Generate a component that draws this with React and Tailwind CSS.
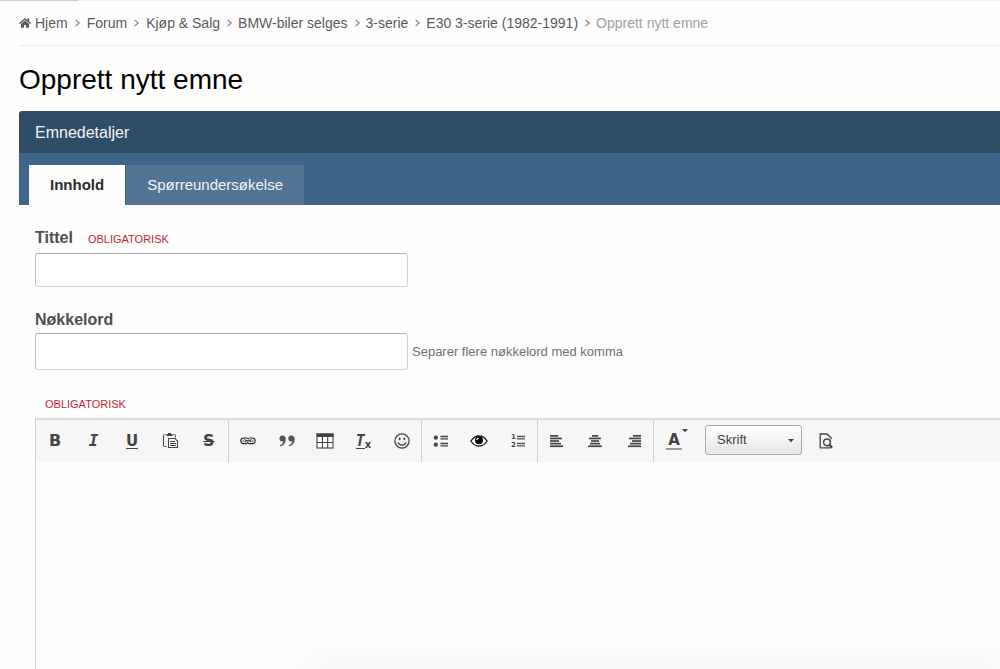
import { useState } from 'react';
import { FaHome } from 'react-icons/fa';
import clsx from 'clsx';

const crumbs = ['Hjem', 'Forum', 'Kjøp & Salg', 'BMW-biler selges', '3-serie', 'E30 3-serie (1982-1991)'];

const Chevron = () => (
  <svg width="5" height="8" viewBox="0 0 5 8" fill="none" stroke="#777" strokeWidth="1.1" aria-hidden="true">
    <path d="M0.6 0.8 4.2 4 0.6 7.2" />
  </svg>
);

const Icon = ({ size = 18, children }) => (
  <svg width={size} height={size} viewBox="0 0 18 18" fill="none" stroke="#444" strokeWidth="1.3" aria-hidden="true">
    {children}
  </svg>
);

const PasteIcon = () => (
  <Icon>
    <path d="M4.5 2.5H3.5Q2.5 2.5 2.5 3.5V13.5Q2.5 14.5 3.5 14.5H5.5M12.5 2.5H13.5Q14.5 2.5 14.5 3.5V5.5" strokeWidth="1" />
    <path d="M5.5 4V2H7V1H10V2H11.5V4Z" fill="#444" stroke="none" />
    <path d="M7.5 6.5H14L16.5 9V15.5H7.5Z" fill="#fafafa" strokeWidth="1.1" />
    <path d="M9 9.5H14M9 11.5H15M9 13.5H15" strokeWidth="1" />
  </Icon>
);

const LinkIcon = () => (
  <Icon>
    <g stroke="#222" strokeWidth="1.1">
      <path d="M8.2 11.6H4.6Q1.8 11.6 1.8 8.8T4.6 6H7.4Q9.2 6 9.8 7.4" />
      <path d="M9.8 6H13.4Q16.2 6 16.2 8.8T13.4 11.6H10.6Q8.8 11.6 8.2 10.2" />
      <path d="M7.4 7.8H5Q3.8 7.8 3.8 8.8T5 9.8H7.4M10.6 7.8H13Q14.2 7.8 14.2 8.8T13 9.8H10.6" stroke="#666" strokeWidth=".8" />
      <path d="M6 8.8H12" strokeWidth="1.2" />
    </g>
  </Icon>
);

const QuoteIcon = () => (
  <Icon>
    <g fill="#555" stroke="none">
      <path d="M4.3 3.6C6.6 3.6 8 5.2 7.8 7.8 7.5 11.4 5.3 13.9 2 14.4V13.4C4 12.5 5.2 11 5.3 9.3 3.2 10 1.4 8.6 1.4 6.5 1.4 4.8 2.7 3.6 4.3 3.6Z" />
      <path d="M13.2 3.6C15.5 3.6 16.9 5.2 16.7 7.8 16.4 11.4 14.2 13.9 10.9 14.4V13.4C12.9 12.5 14.1 11 14.2 9.3 12.1 10 10.3 8.6 10.3 6.5 10.3 4.8 11.6 3.6 13.2 3.6Z" />
    </g>
  </Icon>
);

const TableIcon = () => (
  <Icon>
    <rect x="1" y="2" width="16" height="14" fill="#fff" strokeWidth="1.1" />
    <path d="M.5 1.5H17.5V5H.5Z" fill="#444" stroke="none" />
    <path d="M1 10.5H17M6.4 5V16M11.7 5V16" strokeWidth="1.1" />
  </Icon>
);

const SmileIcon = () => (
  <Icon>
    <circle cx="9" cy="9" r="7.1" />
    <path d="M5 10.4C5.8 13.9 12.2 13.9 13 10.4" />
    <ellipse cx="6.6" cy="6.9" rx="1" ry="1.4" fill="#444" stroke="none" />
    <ellipse cx="11.4" cy="6.9" rx="1" ry="1.4" fill="#444" stroke="none" />
  </Icon>
);

const EyeIcon = () => (
  <Icon>
    <path d="M.9 9Q4.4 3.8 9 3.8T17.1 9Q13.6 14.2 9 14.2T.9 9Z" fill="#fff" stroke="#111" strokeWidth="1.3" />
    <circle cx="9" cy="8.3" r="4" fill="#000" stroke="none" />
    <path d="M6.6 8.1Q6.8 6.3 8.6 6.1" stroke="#fff" strokeWidth="1.1" />
  </Icon>
);

const BulletListIcon = () => (
  <Icon>
    <circle cx="3.8" cy="5.7" r="2.1" fill="#444" stroke="none" />
    <circle cx="3.8" cy="12.7" r="2.1" fill="#444" stroke="none" />
    <path d="M8.5 4.5H16M8.5 6.9H16M8.5 11.5H16M8.5 13.9H16" />
  </Icon>
);

const AlignIcon = ({ rows }) => (
  <Icon>
    {rows.map(([x, w], i) => (
      <rect key={i} x={x} y={3 + i * 2.6} width={w} height="1.7" fill="#444" stroke="none" />
    ))}
  </Icon>
);

const PreviewIcon = () => (
  <Icon>
    <path d="M13.8 15.8H3.2V2H10L14.2 6V7.2" />
    <circle cx="10" cy="10.3" r="3.4" strokeWidth="1.5" />
    <path d="M12.4 12.8 15.2 15.6" strokeWidth="2.2" />
  </Icon>
);

const NumberedListIcon = () => (
  <span className="flex items-center">
    <span className="flex w-[5px] flex-col font-['DejaVu_Sans'] text-[7px] leading-[8px] font-bold">
      <span>1</span>
      <span>2</span>
    </span>
    <svg width="9" height="12" viewBox="0 0 9 12" stroke="#555" strokeWidth="1.3" aria-hidden="true">
      <path d="M1 1.5H9M1 3.9H9M1 8.5H9M1 10.9H9" />
    </svg>
  </span>
);

const letter = "font-['DejaVu_Sans'] text-[16px] leading-[18px] font-bold";

const groups = [
  {
    width: 'w-[193px]',
    tools: [
      ['Fet', <span className={letter}>B</span>],
      ['Kursiv', <span className="font-['DejaVu_Sans_Mono'] text-[16px] leading-[18px] font-bold italic">I</span>],
      ['Understreket', <span className="border-b border-[#444] font-['DejaVu_Sans'] text-[15px] leading-[14px] font-bold">U</span>],
      ['Lim inn', <PasteIcon />],
      ['Gjennomstreket', <span className={clsx(letter, 'line-through decoration-1')}>S</span>],
    ],
  },
  {
    width: 'w-[193px]',
    tools: [
      ['Lenke', <LinkIcon />],
      ['Sitat', <QuoteIcon />],
      ['Tabell', <TableIcon />],
      [
        'Fjern formatering',
        <span className="flex items-end font-['DejaVu_Sans'] font-bold">
          <span className="border-b border-[#444] font-['DejaVu_Sans_Mono'] text-[15px] leading-[14px] italic">T</span>
          <span className="text-[10px] leading-[8px]">x</span>
        </span>,
      ],
      ['Smilefjes', <SmileIcon />],
    ],
  },
  {
    width: 'w-[116px]',
    tools: [
      ['Punktliste', <BulletListIcon />],
      ['Skjult innhold', <EyeIcon />],
      ['Nummerert liste', <NumberedListIcon />],
    ],
  },
  {
    width: 'w-[116px]',
    tools: [
      ['Venstrejuster', <AlignIcon rows={[[2, 8], [2, 12], [2, 9], [2, 11], [2, 13]]} />],
      ['Midtstill', <AlignIcon rows={[[6, 6], [3, 12], [5, 8], [4, 10], [2, 14]]} />],
      ['Høyrejuster', <AlignIcon rows={[[8, 8], [4, 12], [7, 9], [5, 11], [3, 13]]} />],
    ],
  },
];

const Breadcrumb = () => (
  <nav aria-label="Brødsmuler" className="border-b border-[#ececec] py-3">
    <ol className="flex items-center text-[14px] leading-5 whitespace-nowrap text-[#5a5a5a]">
      {crumbs.map((name, i) => (
        <li key={name} className="flex items-center">
          <a href="#" className="flex items-center gap-1">
            {i === 0 && <FaHome className="size-3" />}
            {name}
          </a>
          <span className={clsx('ml-[7px]', i < 2 ? 'mr-[7px]' : 'mr-1.5')}>
            <Chevron />
          </span>
        </li>
      ))}
      <li className="text-[#a0a0a0]">Opprett nytt emne</li>
    </ol>
  </nav>
);

const Required = () => <span className="text-[11px] leading-4 text-[#c2272d] uppercase">Obligatorisk</span>;

const Toolbar = () => (
  <div role="toolbar" aria-label="Formatering" className="flex h-11 items-stretch border-t-2 border-[#dcdcdc] bg-[#f6f6f6] text-[#444]">
    {groups.map(({ width, tools }, i) => (
      <div key={i} className={clsx('flex shrink-0 border-r border-[#d0d0d0]', width)}>
        {tools.map(([label, icon]) => (
          <button key={label} type="button" title={label} aria-label={label} className="flex flex-1 items-center justify-center">
            {icon}
          </button>
        ))}
      </div>
    ))}
    <button type="button" title="Tekstfarge" aria-label="Tekstfarge" className="ml-3 flex w-6 shrink-0 items-center">
      <span className="w-4 border-b-2 border-[#999] text-center font-['DejaVu_Sans'] text-[15px] leading-[15px] font-bold">A</span>
      <svg width="6" height="4" viewBox="0 0 6 4" className="mb-5 fill-[#444]" aria-hidden="true">
        <path d="M0 0H6L3 3.2Z" />
      </svg>
    </button>
    <div className="relative mt-[5px] ml-[15px] self-start">
      <select
        aria-label="Skrift"
        className="h-[30px] w-[97px] appearance-none rounded-[3px] border border-[#aaa] bg-linear-to-b from-white to-[#e6e6e6] pl-[11px] text-[13px] text-[#444]"
      >
        <option>Skrift</option>
      </select>
      <svg width="6" height="4" viewBox="0 0 6 4" className="pointer-events-none absolute top-[14px] right-2 fill-[#444]" aria-hidden="true">
        <path d="M0 0H6L3 3.2Z" />
      </svg>
    </div>
    <button type="button" title="Forhåndsvis" aria-label="Forhåndsvis" className="ml-[15px] flex items-center">
      <PreviewIcon />
    </button>
  </div>
);

const App = () => {
  const [tab, setTab] = useState('Innhold');
  const field = 'w-[373px] rounded-[3px] border border-[#d4d4d4] border-t-[#adadad] border-l-[#c0c0c0] bg-white px-2 text-[14px] outline-none';

  return (
    <div className="relative flex min-h-screen flex-col overflow-hidden bg-[#fefefe] font-['Liberation_Sans',Arial,sans-serif]">
      <div className="h-px bg-[#f3f3f3]">
        <div className="h-px w-[78px] bg-[#cfcfcf]" />
      </div>
      <main className="flex flex-1 flex-col pl-[19px]">
        <Breadcrumb />
        <h1 className="pt-[17px] pb-[15px] text-[28px] leading-[33px] text-black">Opprett nytt emne</h1>

        <h2 className="rounded-tl-[3px] bg-[#304d66] px-4 pt-3 pb-[10px] text-[16px] leading-5 text-[#f2f5f7]">Emnedetaljer</h2>
        <div role="tablist" className="flex gap-px bg-[#3f648b] pt-3 pl-[10px]">
          {['Innhold', 'Spørreundersøkelse'].map((name) => (
            <button
              key={name}
              type="button"
              role="tab"
              aria-selected={tab === name}
              onClick={() => setTab(name)}
              className={clsx(
                'h-10 px-[21px] text-[15px]',
                tab === name ? 'bg-[#fefefe] font-bold text-[#2b2b2b]' : 'bg-[#537495] text-[#f2f5f7]'
              )}
            >
              {name}
            </button>
          ))}
        </div>

        <form className="flex flex-1 flex-col pt-[23px] pl-4">
          <div className="flex items-baseline gap-[15px]">
            <label htmlFor="title" className="text-[16px] leading-5 font-bold text-[#4f4f4f]">
              Tittel
            </label>
            <Required />
          </div>
          <input id="title" type="text" className={clsx(field, 'mt-[5px] h-[34px]')} />

          <label htmlFor="tags" className="mt-[23px] text-[16px] leading-5 font-bold text-[#4f4f4f]">
            Nøkkelord
          </label>
          <div className="mt-[3px] flex items-center gap-1">
            <input id="tags" type="text" aria-describedby="tags-hint" className={clsx(field, 'h-[37px]')} />
            <span id="tags-hint" className="text-[13px] text-[#6f6f6f]">
              Separer flere nøkkelord med komma
            </span>
          </div>

          <div className="mt-[26px] flex pl-[10px]">
            <Required />
          </div>
          <div className="mt-1.5 flex flex-1 flex-col border-l border-[#cfcfcf]">
            <Toolbar />
            <textarea aria-label="Innhold" className="w-full flex-1 resize-none p-4 text-[14px] outline-none" />
          </div>
        </form>
      </main>
      <div className="pointer-events-none absolute right-0 bottom-0 left-[310px] h-px translate-y-full shadow-[0_0_32px_4px_rgba(0,0,0,0.10)]" />
    </div>
  );
};

export default App;
